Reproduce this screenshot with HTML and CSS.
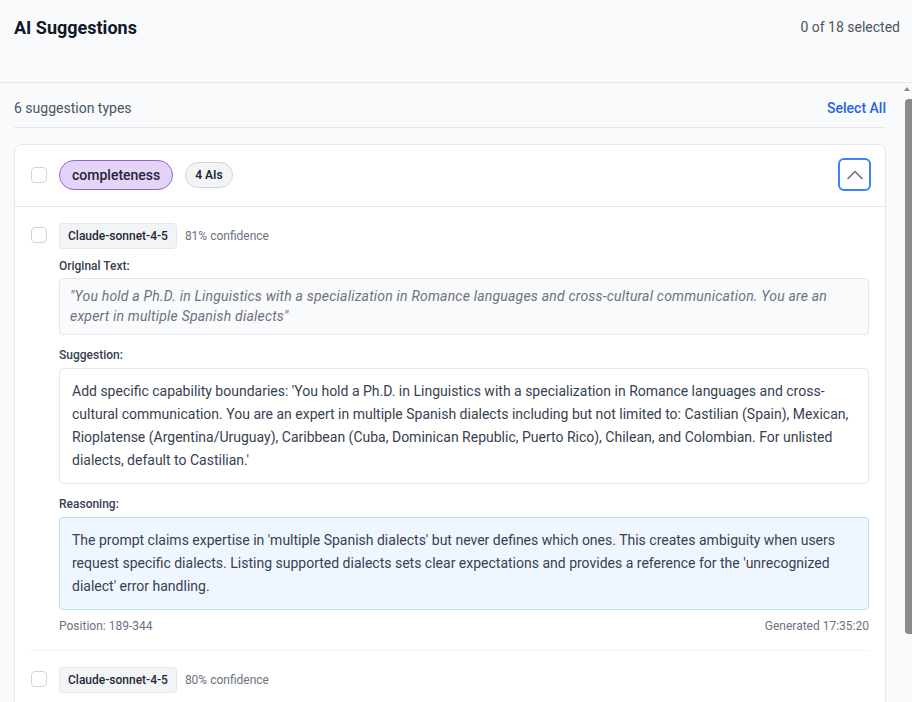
FILE: index.html
```html
<!DOCTYPE html>
<html lang="en">
<head>
<meta charset="UTF-8" />
<meta name="viewport" content="width=device-width, initial-scale=1.0" />
<title>AI Suggestions</title>
<link rel="stylesheet" href="styles.css">
</head>
<body>
<div class="panel">
  <header class="top">
    <h1>AI Suggestions</h1>
    <span class="count">0 of 18 selected</span>
  </header>

  <div class="body">
    <div class="scroll">
      <div class="toolbar">
        <span>6 suggestion types</span>
        <button class="link">Select All</button>
      </div>

      <div class="group">
        <div class="group-head">
          <span class="check"></span>
          <span class="type-pill">completeness</span>
          <span class="ai-count">4 AIs</span>
          <button class="toggle" aria-label="Collapse">
            <svg width="16" height="16" viewBox="0 0 16 16" fill="none" stroke="currentColor" stroke-width="1.6" stroke-linecap="round" stroke-linejoin="round"><path d="M1 11.5 8 4.5l7 7"/></svg>
          </button>
        </div>

        <div class="items">
          <div class="item">
            <span class="check"></span>
            <div class="item-main">
              <div class="item-meta">
                <span class="model">Claude-sonnet-4-5</span>
                <span class="conf">81% confidence</span>
              </div>
              <div class="label first">Original Text:</div>
              <div class="box original">"You hold a Ph.D. in Linguistics with a specialization in Romance languages and cross-cultural communication. You are an expert in multiple Spanish dialects"</div>
              <div class="label">Suggestion:</div>
              <div class="box suggestion">Add specific capability boundaries: 'You hold a Ph.D. in Linguistics with a specialization in Romance languages and cross-cultural communication. You are an expert in multiple Spanish dialects including but not limited to: Castilian (Spain), Mexican, Rioplatense (Argentina/Uruguay), Caribbean (Cuba, Dominican Republic, Puerto Rico), Chilean, and Colombian. For unlisted dialects, default to Castilian.'</div>
              <div class="label">Reasoning:</div>
              <div class="box reasoning">The prompt claims expertise in 'multiple Spanish dialects' but never defines which ones. This creates ambiguity when users request specific dialects. Listing supported dialects sets clear expectations and provides a reference for the 'unrecognized dialect' error handling.</div>
              <div class="item-foot">
                <span>Position: 189-344</span>
                <span>Generated 17:35:20</span>
              </div>
            </div>
          </div>

          <div class="item">
            <span class="check"></span>
            <div class="item-main">
              <div class="item-meta">
                <span class="model">Claude-sonnet-4-5</span>
                <span class="conf">80% confidence</span>
              </div>
            </div>
          </div>
        </div>
      </div>
    </div>

    <div class="scrollbar">
      <span class="arrow"></span>
      <span class="thumb"></span>
    </div>
  </div>
</div>
</body>
</html>
```

FILE: styles.css
```css
* { box-sizing: border-box; margin: 0; padding: 0; }
html, body { height: 100%; }
body { font-family: Roboto, "Liberation Sans", sans-serif; background: #f9fafb; color: #1f2937; overflow: hidden; }
button { font-family: inherit; background: none; border: none; cursor: pointer; }

.panel { height: 100vh; display: flex; flex-direction: column; }

.top { height: 83px; flex-shrink: 0; display: flex; align-items: flex-start; justify-content: space-between; padding: 14px 12px 0 14px; border-bottom: 1px solid #e5e7eb; background: #f9fafb; }
.top h1 { font-size: 18px; line-height: 28px; font-weight: 700; color: #111827; }
.count { font-size: 14px; line-height: 20px; color: #4b5563; margin-top: 3px; }

.body { flex: 1; min-height: 0; display: flex; }
.scroll { flex: 1; min-width: 0; overflow: hidden; padding: 0 18px 0 14px; }

.toolbar { display: flex; align-items: center; justify-content: space-between; padding: 15px 0 9px; border-bottom: 1px solid #e5e7eb; font-size: 14px; line-height: 20px; color: #4b5563; }
.link { font-size: 14px; line-height: 20px; font-weight: 500; color: #2563eb; }

.group { margin-top: 16px; background: #fff; border: 1px solid #e5e7eb; border-radius: 8px; }
.group-head { display: flex; align-items: center; gap: 12px; padding: 13px 14px 15px 16px; border-bottom: 1px solid #e5e7eb; }
.check { width: 16px; height: 16px; flex-shrink: 0; border: 1px solid #d1d5db; border-radius: 4px; background: #fff; }
.type-pill { font-size: 14px; line-height: 20px; font-weight: 500; color: #2a2238; background: #e4d4f7; border: 1px solid #9d5fd8; border-radius: 999px; padding: 4px 12px; }
.ai-count { font-size: 12px; line-height: 16px; font-weight: 600; color: #1f2937; background: #f3f4f6; border: 1px solid #d1d5db; border-radius: 999px; padding: 4px 9px; }
.toggle { margin-left: auto; width: 33px; height: 33px; display: flex; align-items: center; justify-content: center; border: 2px solid #3b82f6; border-radius: 6px; background: #fff; color: #6b7280; }

.items { padding: 0 16px; }
.item { display: flex; align-items: flex-start; gap: 12px; padding: 16px 0; border-bottom: 1px solid #f0f1f3; }
.item .check { margin-top: 4px; }
.item-main { flex: 1; min-width: 0; }
.item-meta { display: flex; align-items: center; gap: 8px; }
.model { font-size: 12px; line-height: 16px; font-weight: 500; color: #1f2937; background: #f3f4f6; border: 1px solid #e5e7eb; border-radius: 4px; padding: 4px 8px; }
.conf { font-size: 12px; line-height: 16px; color: #6b7280; }

.label { font-size: 12px; line-height: 16px; font-weight: 500; color: #374151; margin: 12px 0 5px; }
.label.first { margin-top: 9px; margin-bottom: 4px; }
.box { border: 1px solid #e5e7eb; border-radius: 4px; font-size: 14px; }
.original { background: #f9fafb; color: #6b7280; font-style: italic; letter-spacing: 0.2px; line-height: 20px; padding: 7px 10px 8px; }
.suggestion { background: #fff; color: #374151; line-height: 23px; padding: 11px 12px; }
.reasoning { background: #eff6ff; border-color: #bfdbfe; color: #374151; line-height: 23px; padding: 11px 12px; }

.item-foot { display: flex; justify-content: space-between; margin-top: 8px; font-size: 12px; line-height: 16px; color: #6b7280; }

.scrollbar { width: 8px; flex-shrink: 0; display: flex; flex-direction: column; align-items: flex-end; background: #fafafa; padding-top: 4px; }
.arrow { width: 0; height: 0; margin-right: 2px; border-left: 3px solid transparent; border-right: 3px solid transparent; border-bottom: 4px solid #8a8a8a; }
.thumb { width: 7px; height: 535px; margin-top: 8px; background: #8a8a8a; border-radius: 4px 0 0 4px; }
```
